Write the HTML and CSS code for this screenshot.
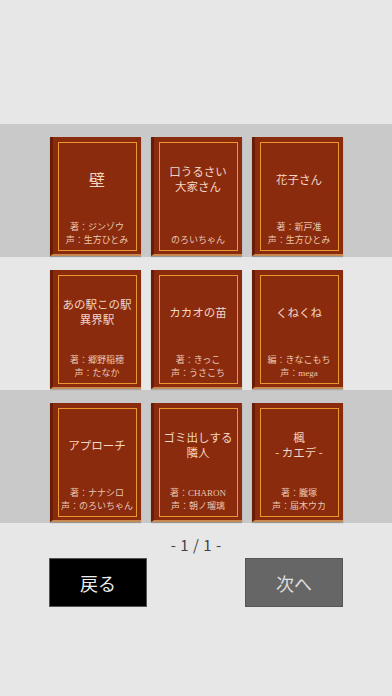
FILE: index.html
```html
<!DOCTYPE html>
<html lang="ja">
<head>
    <meta charset="UTF-8">
    <meta name="viewport" content="width=device-width, initial-scale=1.0">
    <title>本棚</title>
    <link rel="stylesheet" href="styles.css">
</head>
<body>
    <div class="shelf-wrap">
        <div class="shelf dark">
            <div class="book">
                <div class="book-inner">
                    <p class="book-title big">壁</p>
                    <p class="book-credit">著：ジンゾウ<br>声：生方ひとみ</p>
                </div>
            </div>
            <div class="book">
                <div class="book-inner">
                    <p class="book-title">口うるさい<br>大家さん</p>
                    <p class="book-credit">のろいちゃん</p>
                </div>
            </div>
            <div class="book">
                <div class="book-inner">
                    <p class="book-title">花子さん</p>
                    <p class="book-credit">著：新戸准<br>声：生方ひとみ</p>
                </div>
            </div>
        </div>
        <div class="shelf">
            <div class="book">
                <div class="book-inner">
                    <p class="book-title">あの駅この駅<br>異界駅</p>
                    <p class="book-credit">著：郷野稲穂<br>声：たなか</p>
                </div>
            </div>
            <div class="book">
                <div class="book-inner">
                    <p class="book-title">カカオの苗</p>
                    <p class="book-credit">著：きっこ<br>声：うさこち</p>
                </div>
            </div>
            <div class="book">
                <div class="book-inner">
                    <p class="book-title">くねくね</p>
                    <p class="book-credit">編：きなこもち<br>声：mega</p>
                </div>
            </div>
        </div>
        <div class="shelf dark">
            <div class="book">
                <div class="book-inner">
                    <p class="book-title">アプローチ</p>
                    <p class="book-credit">著：ナナシロ<br>声：のろいちゃん</p>
                </div>
            </div>
            <div class="book">
                <div class="book-inner">
                    <p class="book-title">ゴミ出しする<br>隣人</p>
                    <p class="book-credit">著：CHARON<br>声：朝ノ瑠璃</p>
                </div>
            </div>
            <div class="book">
                <div class="book-inner">
                    <p class="book-title">楓<br>- カエデ -</p>
                    <p class="book-credit">著：朧塚<br>声：届木ウカ</p>
                </div>
            </div>
        </div>
    </div>

    <p class="pager">- 1 / 1 -</p>
    <div class="nav">
        <button type="button" class="nav-btn back">戻る</button>
        <button type="button" class="nav-btn next">次へ</button>
    </div>
</body>
</html>
```

FILE: styles.css
```css
* {
    margin: 0;
    padding: 0;
    box-sizing: border-box;
}

body {
    background-color: #e7e7e7;
    width: 392px;
    height: 696px;
    overflow: hidden;
    font-family: "Liberation Serif", "Noto Sans CJK JP", serif;
}

.shelf-wrap {
    margin-top: 124px;
}

/* 棚の一段 */
.shelf {
    height: 133px;
    display: flex;
    justify-content: center;
    align-items: flex-end;
    gap: 10px;
    padding-bottom: 1px;
}

.shelf.dark {
    background-color: #c9c9c9;
}

/* 本の表紙 */
.book {
    width: 91px;
    height: 119px;
    background-color: #8a2b0d;
    border-left: 3px solid #6a1d06;
    border-bottom: 2px solid #c98a52;
    box-shadow: 0 1px 1px rgba(0, 0, 0, 0.25);
    padding: 5px 4px 3px 5px;
}

.book-inner {
    height: 100%;
    border: 1.5px solid #ea982e;
    display: flex;
    flex-direction: column;
    align-items: center;
    text-align: center;
    color: #f2d6c6;
}

.book-title {
    height: 72px;
    display: flex;
    align-items: center;
    justify-content: center;
    font-family: "Noto Sans CJK JP", sans-serif;
    font-size: 11.5px;
    line-height: 15px;
    white-space: nowrap;
}

/* 一文字だけのタイトルは大きく */
.book-title.big {
    font-size: 16px;
}

.book-credit {
    margin-top: auto;
    font-size: 9px;
    line-height: 13px;
    color: #e9c6b2;
    padding-bottom: 3px;
    white-space: nowrap;
}

.pager {
    text-align: center;
    font-family: "Noto Sans CJK JP", sans-serif;
    font-size: 15px;
    word-spacing: 1px;
    color: #444;
    margin-top: 11px;
    line-height: 22px;
}

.nav {
    display: flex;
    justify-content: space-between;
    padding: 0 49px;
    margin-top: 2px;
}

.nav-btn {
    width: 98px;
    height: 49px;
    border: 1px solid #555;
    font-family: "Noto Sans CJK JP", sans-serif;
    font-size: 18px;
    cursor: pointer;
}

.nav-btn.back {
    background-color: #000;
    color: #eee;
}

.nav-btn.next {
    background-color: #666;
    color: #ddd;
}
```
